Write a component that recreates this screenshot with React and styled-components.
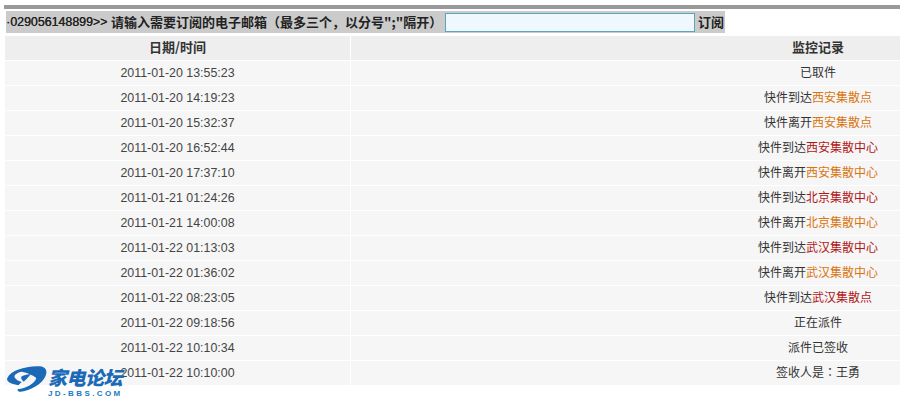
import React from "react";
import styled, { createGlobalStyle } from "styled-components";

const Global = createGlobalStyle`
  html, body { margin: 0; padding: 0; background: #fff; }
  body { width: 900px; height: 402px; overflow: hidden; font-family: "Liberation Sans", "Noto Sans CJK SC", sans-serif; color: #333; }
`;
const Page = styled.div`
  position: relative;
  width: 900px;
  height: 402px;
  padding: 5px 0 0 4px;
  box-sizing: border-box;
`;
const TopRule = styled.div`
  height: 4px;
  background: #999;
`;
const Toolbar = styled.div`
  display: flex;
  align-items: center;
  width: 719px;
  height: 22px;
  margin: 2px 0 3px 2px;
  background: #cbcbcb;
  font-size: 12.4px;
  color: #222;
  white-space: nowrap;
`;
const Code = styled.span`
  width: 105px;
  flex: none;
  text-shadow: 0.3px 0 0 #222;
`;
const Prompt = styled.span`
  width: 334px;
  flex: none;
  padding-bottom: 2px;
  font-family: "Noto Sans CJK SC", sans-serif;
  font-size: 13px;
  font-weight: 700;
`;
const Mail = styled.input`
  box-sizing: border-box;
  width: 250px;
  height: 19px;
  flex: none;
  padding: 0 4px;
  border: 1px solid #5aa5c0;
  background: #f0f8ff;
  outline: none;
`;
const Subscribe = styled.span`
  margin-left: 3px;
  padding-bottom: 2px;
  font-family: "Noto Sans CJK SC", sans-serif;
  font-size: 13px;
  font-weight: 700;
`;
const Table = styled.div`
  display: grid;
  grid-template-columns: 345px 549px;
  gap: 1px;
  margin-left: 1px;
`;
const Cell = styled.div`
  box-sizing: border-box;
  display: flex;
  align-items: center;
  justify-content: center;
  height: 24px;
  background: ${(p) => (p.$head ? "#eeeeee" : "#f6f6f6")};
  padding-bottom: ${(p) => (p.$head ? "4px" : "0")};
  font-size: ${(p) => (p.$head ? "13px" : "12.4px")};
  font-weight: ${(p) => (p.$head ? 700 : 400)};
  font-family: ${(p) => (p.$head ? '"Noto Sans CJK SC", sans-serif' : '"Liberation Sans", sans-serif')};
  color: ${(p) => (p.$head ? "#333" : "#444")};
`;
const LogCell = styled(Cell)`
  padding-left: 385px;
  padding-bottom: ${(p) => (p.$head ? "4px" : "3px")};
  font-size: ${(p) => (p.$head ? "13px" : "12px")};
  font-family: "Noto Sans CJK SC", sans-serif;
  color: #333;
  white-space: nowrap;
`;
const Place = styled.span`
  color: ${(p) => (p.$red ? "#b01818" : "#d9750f")};
`;
const Colon = styled.span`
  font-family: "Noto Sans CJK TC", sans-serif;
`;
const Logo = styled.div`
  position: absolute;
  left: 7px;
  top: 365px;
  width: 120px;
  height: 33px;
`;
const LogoMark = styled.svg`
  position: absolute;
  left: 0;
  top: 1px;
`;
const LogoName = styled.span`
  position: absolute;
  left: 41px;
  top: -1px;
  font-family: "Noto Sans CJK SC", sans-serif;
  font-size: 19px;
  font-weight: 900;
  font-style: italic;
  letter-spacing: -0.5px;
  line-height: 26px;
  color: #1a6ab8;
  white-space: nowrap;
`;
const LogoUrl = styled.span`
  position: absolute;
  left: 41px;
  top: 25px;
  font-family: "Liberation Sans", sans-serif;
  font-size: 8px;
  font-weight: 700;
  letter-spacing: 2.4px;
  line-height: 8px;
  color: #1a7ac4;
  white-space: nowrap;
`;

const rows = [
  ["2011-01-20 13:55:23", "已取件"],
  ["2011-01-20 14:19:23", "快件到达", "西安集散点"],
  ["2011-01-20 15:32:37", "快件离开", "西安集散点"],
  ["2011-01-20 16:52:44", "快件到达", "西安集散中心", true],
  ["2011-01-20 17:37:10", "快件离开", "西安集散中心"],
  ["2011-01-21 01:24:26", "快件到达", "北京集散中心", true],
  ["2011-01-21 14:00:08", "快件离开", "北京集散中心"],
  ["2011-01-22 01:13:03", "快件到达", "武汉集散中心", true],
  ["2011-01-22 01:36:02", "快件离开", "武汉集散中心"],
  ["2011-01-22 08:23:05", "快件到达", "武汉集散点", true],
  ["2011-01-22 09:18:56", "正在派件"],
  ["2011-01-22 10:10:34", "派件已签收"],
  ["2011-01-22 10:10:00", <>签收人是<Colon>：</Colon>王勇</>],
];

export default function App() {
  return (
    <Page>
      <Global />
      <TopRule />
      <Toolbar>
        <Code>·029056148899&gt;&gt;</Code>
        <Prompt>请输入需要订阅的电子邮箱（最多三个，以分号";"隔开）</Prompt>
        <Mail />
        <Subscribe>订阅</Subscribe>
      </Toolbar>
      <Table>
        <Cell $head>日期/时间</Cell>
        <LogCell $head>监控记录</LogCell>
        {rows.map(([time, text, place, red]) => (
          <React.Fragment key={time}>
            <Cell>{time}</Cell>
            <LogCell>
              {text}
              {place && <Place $red={red}>{place}</Place>}
            </LogCell>
          </React.Fragment>
        ))}
      </Table>
      <Logo>
        <LogoMark width="40" height="27" viewBox="0 0 120 81">
          <path d="M1 36C12 14 50 2 90 1C108 0 120 6 118 22C115 44 86 68 50 76C38 79 30 76 32 70C56 68 84 52 88 36C78 28 62 20 44 17C30 20 18 28 24 36C28 42 36 46 44 48L34 58C14 54 -4 48 1 36Z" fill="#1a6ab8" />
          <path d="M44 31C56 26 66 24 72 24C64 34 56 42 50 47C44 42 40 37 44 31Z" fill="#1a6ab8" />
        </LogoMark>
        <LogoName>家电论坛</LogoName>
        <LogoUrl>JD-BBS.COM</LogoUrl>
      </Logo>
    </Page>
  );
}
